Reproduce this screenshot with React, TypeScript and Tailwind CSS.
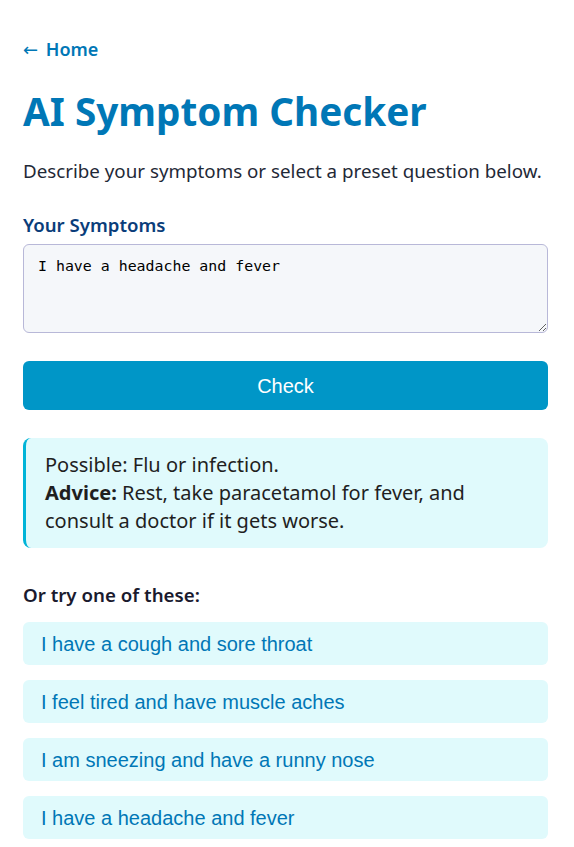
import React from "react";

const presets = [
  "I have a cough and sore throat",
  "I feel tired and have muscle aches",
  "I am sneezing and have a runny nose",
  "I have a headache and fever",
];

export default function App() {
  return (
    <div
      className="min-h-screen bg-white pl-[23px] pt-[37px] pb-[8px]"
      style={{ fontFamily: '"Noto Sans", "Open Sans", sans-serif' }}
    >
      <div className="w-[525px]">
        <a className="block text-[18px] font-semibold leading-[24px] text-[#0077b6]">
          <span className="mr-[3px] font-normal" style={{ fontFamily: '"DejaVu Sans", sans-serif' }}>←</span> Home
        </a>
        <h1 className="mt-[25px] text-[38.7px] font-bold leading-[48px] text-[#0077b6]">AI Symptom Checker</h1>
        <p className="mt-[23px] text-[18.75px] leading-[26px] text-[#1f2937]">
          Describe your symptoms or select a preset question below.
        </p>
        <label className="mt-[28px] block text-[18.6px] font-semibold leading-[26px] text-[#0a3d7a]">Your Symptoms</label>
        <textarea
          className="mt-[6px] block h-[89px] w-full resize-y rounded-[6px] border border-[#b8b8d8] bg-[#f5f7fa] px-[14px] py-[11px] text-[14.9px] leading-[20px] text-black outline-none"
          style={{ fontFamily: '"DejaVu Sans Mono", monospace' }}
          defaultValue="I have a headache and fever"
        />
        <button
          className="mt-[28px] block h-[49px] w-full rounded-[6px] bg-[#0096c7] text-[20px] text-white"
          style={{ fontFamily: '"Liberation Sans", Arial, sans-serif' }}
        >
          Check
        </button>
        <div className="mt-[28px] rounded-[8px] border-l-[3px] border-[#00b4d8] bg-[#e0fafc] py-[13px] pl-[19px] pr-[20px] text-[20px] leading-[28px] text-[#1f1f1f]">
          <div>Possible: Flu or infection.</div>
          <div>
            <strong>Advice:</strong> Rest, take paracetamol for fever, and consult a doctor if it gets worse.
          </div>
        </div>
        <h3 className="mt-[34px] text-[18.7px] font-semibold leading-[26px] text-[#1a1a2e]">Or try one of these:</h3>
        <div className="mt-[14px] flex flex-col gap-[15px]">
          {presets.map((p) => (
            <button
              key={p}
              className="block h-[43px] w-full rounded-[6px] bg-[#e0fafc] pl-[18px] text-left text-[20px] text-[#0077b6]"
              style={{ fontFamily: '"Liberation Sans", Arial, sans-serif' }}
            >
              {p}
            </button>
          ))}
        </div>
      </div>
    </div>
  );
}
